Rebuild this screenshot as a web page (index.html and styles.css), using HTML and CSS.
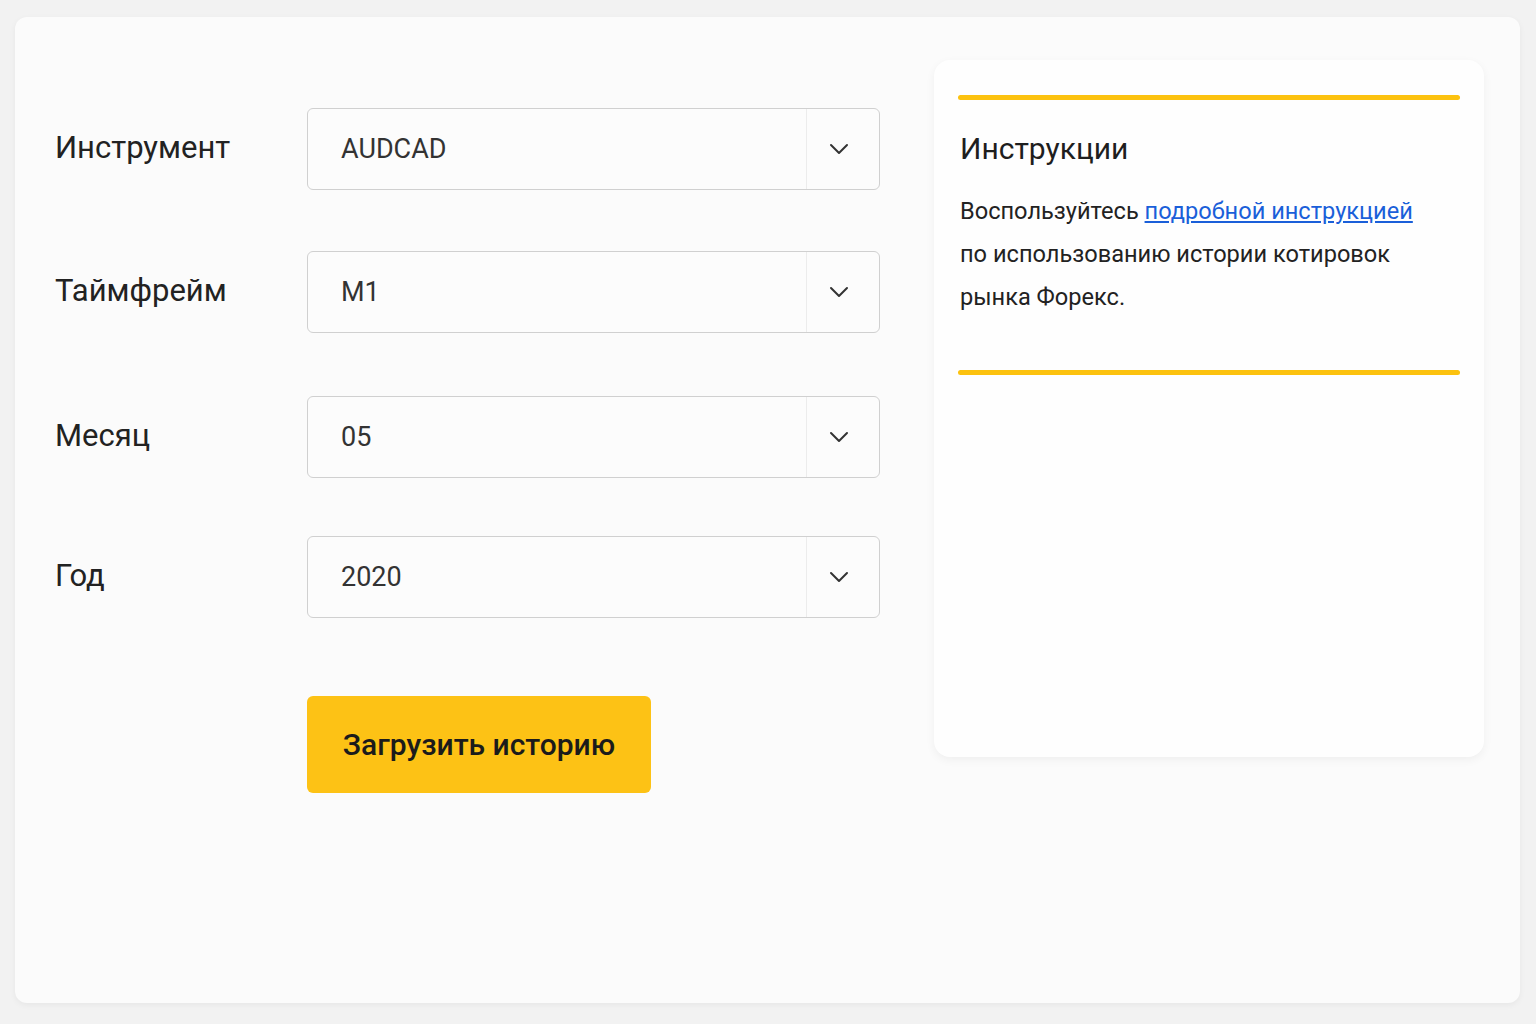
FILE: index.html
```html
<!DOCTYPE html>
<html lang="ru">
<head>
    <meta charset="UTF-8">
    <title>История котировок</title>
    <link rel="stylesheet" href="styles.css">
</head>
<body>
    <div class="page">
        <!-- Form -->
        <form class="history-form">
            <div class="row">
                <label class="label">Инструмент</label>
                <div class="select">
                    <span class="value">AUDCAD</span>
                    <span class="arrow">
                        <svg width="20" height="12" viewBox="0 0 20 12"><path d="M2 2 L10 10 L18 2" fill="none" stroke="#333" stroke-width="2" stroke-linecap="round" stroke-linejoin="round"/></svg>
                    </span>
                </div>
            </div>
            <div class="row">
                <label class="label">Таймфрейм</label>
                <div class="select">
                    <span class="value">M1</span>
                    <span class="arrow">
                        <svg width="20" height="12" viewBox="0 0 20 12"><path d="M2 2 L10 10 L18 2" fill="none" stroke="#333" stroke-width="2" stroke-linecap="round" stroke-linejoin="round"/></svg>
                    </span>
                </div>
            </div>
            <div class="row">
                <label class="label">Месяц</label>
                <div class="select">
                    <span class="value">05</span>
                    <span class="arrow">
                        <svg width="20" height="12" viewBox="0 0 20 12"><path d="M2 2 L10 10 L18 2" fill="none" stroke="#333" stroke-width="2" stroke-linecap="round" stroke-linejoin="round"/></svg>
                    </span>
                </div>
            </div>
            <div class="row">
                <label class="label">Год</label>
                <div class="select">
                    <span class="value">2020</span>
                    <span class="arrow">
                        <svg width="20" height="12" viewBox="0 0 20 12"><path d="M2 2 L10 10 L18 2" fill="none" stroke="#333" stroke-width="2" stroke-linecap="round" stroke-linejoin="round"/></svg>
                    </span>
                </div>
            </div>
            <div class="actions">
                <button type="button" class="load-button">Загрузить историю</button>
            </div>
        </form>

        <!-- Instructions -->
        <div class="instructions">
            <div class="yellow-line"></div>
            <h2>Инструкции</h2>
            <p>Воспользуйтесь <a href="#">подробной инструкцией</a><br>
            по использованию истории котировок<br>
            рынка Форекс.</p>
            <div class="yellow-line"></div>
        </div>
    </div>
</body>
</html>
```

FILE: styles.css
```css
body {
    margin: 0;
    padding: 17px 16px 21px 15px;
    background-color: #f2f2f2;
    font-family: 'Roboto', 'Liberation Sans', sans-serif;
    color: #222;
}

.page {
    height: 986px;
    box-sizing: border-box;
    background: #fbfbfb;
    border-radius: 12px;
    box-shadow: 0 2px 6px rgba(0, 0, 0, 0.05);
    display: flex;
    padding: 43px 36px 0 40px;
}

.history-form {
    width: 825px;
    padding-top: 48px;
}

.row {
    display: flex;
    align-items: center;
    height: 82px;
    margin-bottom: 61px;
}

.row:nth-child(2) {
    margin-bottom: 63px;
}

.row:nth-child(3) {
    margin-bottom: 58px;
}

.label {
    width: 252px;
    font-size: 31px;
    color: #222;
    margin-top: -3px;
}

.select {
    width: 573px;
    height: 82px;
    box-sizing: border-box;
    border: 1.5px solid #d0d0d0;
    border-radius: 6px;
    background: #fcfcfc;
    display: flex;
    align-items: center;
}

.select .value {
    flex: 1;
    padding-left: 33px;
    font-size: 27px;
    color: #333;
}

.select .arrow {
    width: 73px;
    height: 100%;
    box-sizing: border-box;
    padding-right: 9px;
    border-left: 1px solid #ececec;
    display: flex;
    align-items: center;
    justify-content: center;
}

.actions {
    padding-left: 252px;
    margin-top: 78px;
}

.load-button {
    width: 344px;
    height: 97px;
    border: none;
    border-radius: 6px;
    background-color: #fdc215;
    font-family: 'Roboto', 'Liberation Sans', sans-serif;
    font-size: 30px;
    font-weight: 500;
    color: #1b1b1b;
    cursor: pointer;
}

.instructions {
    margin-left: 54px;
    width: 550px;
    height: 697px;
    box-sizing: border-box;
    background: #fefefe;
    border-radius: 16px;
    box-shadow: 0 3px 10px rgba(0, 0, 0, 0.05);
    padding: 35px 24px 0 24px;
}

.yellow-line {
    height: 5px;
    border-radius: 3px;
    background: #fcc20f;
}

.instructions h2 {
    font-size: 30px;
    font-weight: 400;
    color: #1e1e1e;
    margin: 31px 0 24px 2px;
}

.instructions p {
    font-size: 23.6px;
    line-height: 43px;
    color: #222;
    margin: 0 0 51px 2px;
}

.instructions a {
    color: #1a5fd9;
}
```
